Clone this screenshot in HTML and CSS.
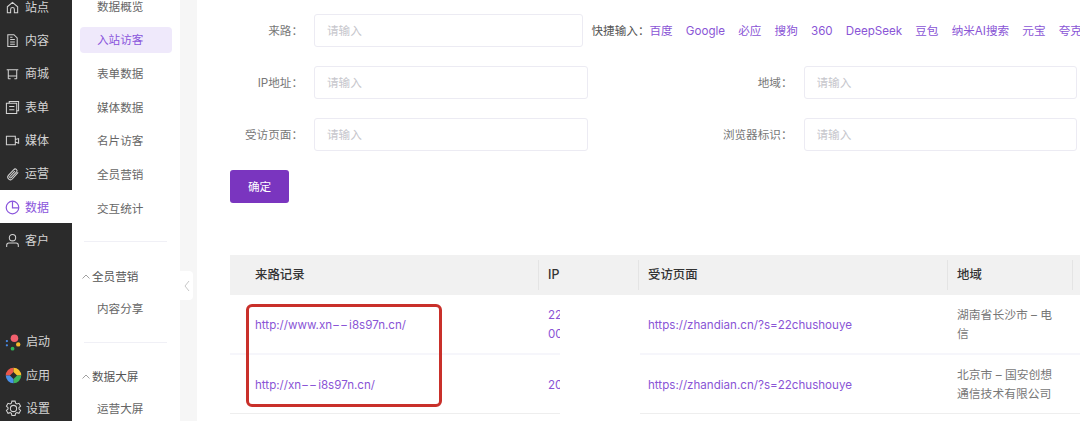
FILE: index.html
```html
<!DOCTYPE html>
<html lang="zh">
<head>
<meta charset="utf-8">
<title>入站访客</title>
<link rel="stylesheet" href="styles.css">
</head>
<body>
<div class="page">
  <aside class="rail">
    <nav class="rail-top">
      <a class="rail-item"><svg class="ri" viewBox="0 0 16 16"><path d="M2.500 7.200 8 2.500l5.500 4.700V13.500H10V10a2 2 0 0 0-4 0v3.500H2.500z"/></svg>站点</a>
      <a class="rail-item"><svg class="ri" viewBox="0 0 16 16"><path d="M3 1.800h6.500L13 5.300v9H3zM5.500 7h5M5.500 9.500h5M5.500 12h5M5.500 4.500H8"/></svg>内容</a>
      <a class="rail-item"><svg class="ri" viewBox="0 0 16 16"><path d="M1.800 3h12.400M3.500 3v6.500h9V3M3.500 9.500v3M12.500 9.500v3M6 12.500H3.500M12.500 12.500H10"/></svg>商城</a>
      <a class="rail-item"><svg class="ri" viewBox="0 0 16 16"><path d="M4.500 3V1.500h10v10H13M1.500 3.500H12.500V14.500H1.500zM4.500 7h5.500M4.500 10.500h5.500"/></svg>表单</a>
      <a class="rail-item"><svg class="ri" viewBox="0 0 16 16"><path d="M1.500 3.500h9.500v9H1.500zM11 7l3.500-1v5L11 9.500"/></svg>媒体</a>
      <a class="rail-item"><svg class="ri" viewBox="0 0 16 16"><path d="M14 5.800 8 12.500a2.800 2.800 0 0 1-4.400-3.500l5.800-6.200a1.900 1.900 0 0 1 3 2.400L6.600 11.400a1 1 0 0 1-1.500-1.300L10.500 4.400"/></svg>运营</a>
      <a class="rail-item rail-item-active"><svg class="ri ri-pie" viewBox="0 0 16 16"><circle cx="8" cy="8" r="6.700"/><path d="M8 1.300V8.500h6.500"/></svg>数据</a>
      <a class="rail-item"><svg class="ri" viewBox="0 0 16 16"><circle cx="8" cy="5" r="3.400"/><path d="M1.800 15v-2c0-1.300 1-2.300 2.300-2.300h7.800c1.300 0 2.300 1 2.300 2.300v2"/></svg>客户</a>
    </nav>
    <nav class="rail-bottom">
      <a class="rail-item rail-item-app">
        <svg class="ra" viewBox="0 0 18 18"><circle cx="10" cy="4.500" r="4" fill="#f2606e"/><circle cx="14" cy="11" r="2.300" fill="#f6b92b"/><circle cx="8" cy="15.500" r="2" fill="#2fb457"/><circle cx="2" cy="7.500" r="1.200" fill="#4a8be8"/><circle cx="2" cy="12" r="1.200" fill="#4a8be8"/></svg>启动
      </a>
      <a class="rail-item rail-item-app">
        <svg class="ra" viewBox="0 0 18 18"><path d="M9 9V.8A8.200 8.200 0 0 0 .8 9z" fill="#e8574c"/><path d="M9 9V.8A8.200 8.200 0 0 1 17.200 9z" fill="#f7c02f"/><path d="M9 9h8.200A8.200 8.200 0 0 1 9 17.200z" fill="#3eb55a"/><path d="M9 9v8.200A8.200 8.200 0 0 1 .8 9z" fill="#4a90e8"/><path d="M9 5.200 12.800 9 9 12.800 5.200 9z" fill="#2b2b2b"/></svg>应用
      </a>
      <a class="rail-item rail-item-app">
        <svg class="ra ra-gear" viewBox="0 0 18 18"><path d="M7.300 1.200h3.400l.5 2.200 1.400.8 2.200-.7 1.700 3-1.700 1.500v1.600l1.700 1.500-1.700 3-2.200-.7-1.400.8-.5 2.200H7.300l-.5-2.200-1.400-.8-2.200.7-1.700-3 1.700-1.500V8.200L1.500 6.500l1.700-3 2.200.7 1.400-.8z"/><circle cx="9" cy="9" r="3.300"/></svg>设置
      </a>
    </nav>
  </aside>

  <aside class="submenu">
    <a class="sub-item">数据概览</a>
    <a class="sub-item sub-item-active">入站访客</a>
    <a class="sub-item">表单数据</a>
    <a class="sub-item">媒体数据</a>
    <a class="sub-item">名片访客</a>
    <a class="sub-item">全员营销</a>
    <a class="sub-item">交互统计</a>
    <div class="sub-divider"></div>
    <div class="sub-head"><svg class="chev" viewBox="0 0 8 5"><path d="M.5 4.500 4 1l3.500 3.500"/></svg>全员营销</div>
    <a class="sub-item">内容分享</a>
    <div class="sub-divider sub-divider-2"></div>
    <div class="sub-head"><svg class="chev" viewBox="0 0 8 5"><path d="M.5 4.500 4 1l3.500 3.500"/></svg>数据大屏</div>
    <a class="sub-item">运营大屏</a>
  </aside>

  <div class="gutter">
    <div class="collapse-tab"><svg viewBox="0 0 6 12"><path d="M5 1 1 6l4 5"/></svg></div>
  </div>

  <main class="main">
    <form class="filter">
      <div class="frow">
        <label class="flabel">来路：</label>
        <input class="finput finput-short" placeholder="请输入">
        <span class="quick-label">快捷输入：</span>
        <div class="quick">
          <a>百度</a><a>Google</a><a>必应</a><a>搜狗</a><a>360</a><a>DeepSeek</a><a>豆包</a><a>纳米AI搜索</a><a>元宝</a><a>夸克</a>
        </div>
      </div>
      <div class="frow">
        <label class="flabel">IP地址：</label>
        <input class="finput" placeholder="请输入">
        <label class="flabel flabel-2">地域：</label>
        <input class="finput" placeholder="请输入">
      </div>
      <div class="frow">
        <label class="flabel">受访页面：</label>
        <input class="finput" placeholder="请输入">
        <label class="flabel flabel-2">浏览器标识：</label>
        <input class="finput" placeholder="请输入">
      </div>
      <button type="button" class="submit">确定</button>
    </form>

    <section class="table">
      <div class="thead">
        <div class="th c-src">来路记录</div>
        <div class="th c-ip">IP</div>
        <div class="th c-page">受访页面</div>
        <div class="th c-geo">地域</div>
      </div>
      <div class="tr">
        <div class="td c-src link"><span>http://www.xn<span class="dash">--</span>i8s97n.cn/</span></div>
        <div class="td c-ipv link">22<br>00</div>
        <div class="gap"></div>
        <div class="td c-page link">https://zhandian.cn/?s=22chushouye</div>
        <div class="td c-geo">湖南省长沙市 – 电信</div>
      </div>
      <div class="tr tr-last">
        <div class="td c-src link"><span>http://xn<span class="dash">--</span>i8s97n.cn/</span></div>
        <div class="td c-ipv link">20</div>
        <div class="gap"></div>
        <div class="td c-page link">https://zhandian.cn/?s=22chushouye</div>
        <div class="td c-geo">北京市 – 国安创想通信技术有限公司</div>
      </div>
      <div class="mark"></div>
    </section>
  </main>
</div>
</body>
</html>
```

FILE: styles.css
```css
* { box-sizing: border-box; }
html, body { margin: 0; height: 100%; overflow: hidden; background: #fff; }
body { font: 12px/20px Inter, "Noto Sans CJK SC", "Noto Sans", sans-serif; color: #666; }
a { color: inherit; text-decoration: none; }

.page { display: flex; width: 1080px; height: 421px; overflow: hidden; }

.rail { flex: 0 0 72px; height: 421px; background: #2b2b2b; display: flex; flex-direction: column; justify-content: space-between; color: #d4d4d4; }
.rail-top { margin-top: -10px; }
.rail-bottom { margin-bottom: -4px; }
.rail-item { display: flex; align-items: center; height: 33.34px; padding: 2px 0 0 5px; gap: 5px; font-size: 12px; white-space: nowrap; }
.rail-item-active { background: #fff; color: #8a55dc; }
.ri { width: 15px; height: 15px; flex: none; fill: none; stroke: currentColor; stroke-width: 1.100; }
.ri-pie { stroke-width: 1.300; }
.rail-item-app { padding: 1px 0 0 5px; gap: 4px; }
.ra { width: 17px; height: 17px; flex: none; }
.ra-gear { fill: none; stroke: #d4d4d4; stroke-width: 1.100; }

.submenu { flex: 0 0 108px; margin-top: -9.300px; display: flex; flex-direction: column; align-items: stretch; color: #666; }
.sub-item { flex: none; height: 33.670px; line-height: 33.670px; padding-left: 25px; font-size: 11.600px; }
.sub-item-active { position: relative; color: #8a55dc; z-index: 0; }
.sub-item-active::before { content: ""; position: absolute; z-index: -1; left: 8px; right: 8px; top: 2.600px; bottom: 5px; background: #efe9fb; border-radius: 4px; }
.sub-divider { flex: none; height: 1px; margin: 14.600px 13px 18.800px 12px; background: #f0f0f6; }
.sub-divider-2 { margin-top: 15.500px; margin-bottom: 18px; }
.sub-head { flex: none; display: flex; align-items: center; height: 32px; padding-left: 10px; gap: 2px; font-size: 11.600px; color: #555; }
.chev { width: 8px; height: 5px; fill: none; stroke: #888; stroke-width: .8; }

.gutter { flex: 0 0 17px; background: #f6f6f6; position: relative; }
.collapse-tab { position: absolute; left: 0; top: 271px; width: 13px; height: 29px; background: #fff; border-radius: 0 4px 4px 0; display: flex; align-items: center; justify-content: center; }
.collapse-tab svg { width: 6px; height: 12px; fill: none; stroke: #c8c8c8; stroke-width: 1; }

.main { flex: 1; min-width: 0; padding: 14px 0 0 33px; }
.filter { display: flex; flex-direction: column; align-items: flex-start; }
.frow { display: flex; align-items: center; height: 33px; margin-bottom: 19px; white-space: nowrap; }
.flabel { width: 73px; margin-right: 11px; text-align: right; color: #777; font-size: 11.600px; flex: none; }
.flabel-2 { width: 205px; }
.finput { width: 273.500px; height: 33px; flex: none; padding: 0 12px; border: 1px solid #ecebf3; border-radius: 3px; background: #fff; font: inherit; font-size: 11.600px; outline: none; }
.finput::placeholder { color: #c6c6cc; }
.finput-short { width: 268.500px; }
.quick-label { margin-left: 9px; width: 58px; flex: none; color: #555; font-size: 11.600px; }
.quick { display: flex; gap: 13.170px; color: #8a55d6; font-size: 11.600px; }

.submit { width: 59px; height: 33px; border: 0; border-radius: 3px; background: #7a35bf; color: #fff; font: inherit; font-size: 11.600px; }

.table { position: relative; margin-top: 52px; width: 850px; }
.thead { display: flex; height: 40px; background: #f1f1f1; align-items: center; }
.th { position: relative; color: #333; font-weight: 500; font-size: 12.400px; padding-left: 25px; }
.thead .c-ip, .thead .c-page, .thead .c-geo { padding-left: 10px; }
.thead .c-ip::before, .thead .c-page::before, .thead .c-geo::before, .thead .c-geo::after { content: ""; position: absolute; left: 0; top: -5px; bottom: -5px; width: 1px; background: #e4e4e4; }
.thead .c-geo::after { left: 125px; }
.c-src { flex: 0 0 308px; }
.c-ip { flex: 0 0 100px; }
.c-page { flex: 0 0 309px; }
.c-geo { flex: 0 0 133px; }
.c-ipv { flex: 0 0 22px; padding-left: 10px; overflow: hidden; white-space: nowrap; }
.gap { flex: 0 0 80px; }
.tr { display: flex; height: 59.500px; }
.td { display: flex; align-items: center; padding-top: 3px; border-bottom: 2px solid #f6f6fb; font-size: 11.600px; line-height: 19.500px; color: #777; }
.tr-last .td { border-bottom: 1px solid #eeeeee; }
.td.link { color: #8a55d6; }
.dash { display: inline-block; width: 17px; transform: scaleX(1.500); transform-origin: left center; }
.td.c-src { padding-left: 25px; }
.td.c-page { flex-basis: 307px; padding-left: 8px; }
.td.c-geo { flex-basis: 133px; padding: 3px 24px 0 10px; font-size: 11.800px; }
.mark { position: absolute; left: 15.700px; top: 49px; width: 196.600px; height: 103.300px; border: 3px solid #c9302a; border-radius: 6px; pointer-events: none; }
```
